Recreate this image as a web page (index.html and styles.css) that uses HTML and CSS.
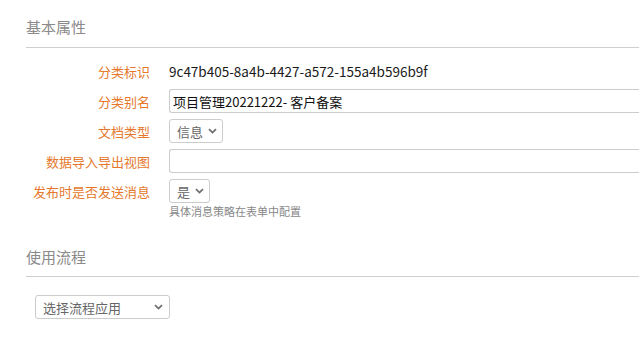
FILE: index.html
```html
<!DOCTYPE html>
<html lang="zh-CN">
<head>
    <meta charset="UTF-8">
    <title>分类属性</title>
    <link rel="stylesheet" href="styles.css">
</head>
<body>
    <div class="page">
        <h3 class="section-title">基本属性</h3>
        <div class="form">
            <div class="form-row">
                <label>分类标识</label>
                <span class="value">9c47b405-8a4b-4427-a572-155a4b596b9f</span>
            </div>
            <div class="form-row">
                <label>分类别名</label>
                <input type="text" class="text-input" value="项目管理20221222- 客户备案">
            </div>
            <div class="form-row">
                <label>文档类型</label>
                <div class="select">信息<svg class="chev" width="9" height="6" viewBox="0 0 9 6"><path d="M1 1.2 L4.5 4.6 L8 1.2" fill="none" stroke="#6f6f6f" stroke-width="1.8"/></svg></div>
            </div>
            <div class="form-row">
                <label>数据导入导出视图</label>
                <input type="text" class="text-input">
            </div>
            <div class="form-row">
                <label>发布时是否发送消息</label>
                <div class="select">是<svg class="chev" width="9" height="6" viewBox="0 0 9 6"><path d="M1 1.2 L4.5 4.6 L8 1.2" fill="none" stroke="#6f6f6f" stroke-width="1.8"/></svg></div>
            </div>
            <div class="help">具体消息策略在表单中配置</div>
        </div>

        <h3 class="section-title second">使用流程</h3>
        <div class="flow">
            <div class="select wide">选择流程应用<svg class="chev" width="9" height="6" viewBox="0 0 9 6"><path d="M1 1.2 L4.5 4.6 L8 1.2" fill="none" stroke="#6f6f6f" stroke-width="1.8"/></svg></div>
        </div>
    </div>
</body>
</html>
```

FILE: styles.css
```css
body { margin: 0; overflow: hidden; background: #fff; font-family: "Noto Sans CJK SC", "Noto Sans", sans-serif; font-size: 13px; color: #222; }
.page { padding-left: 26px; padding-top: 17px; }
.section-title { margin: 0; font-size: 15px; line-height: 20px; font-weight: normal; color: #8a8a8a; padding-bottom: 10px; border-bottom: 1px solid #cfcfcf; }
.section-title.second { margin-top: 29px; padding-bottom: 9px; }
.form { margin-top: 11px; }
.form-row { display: flex; align-items: center; height: 24px; margin-bottom: 6px; }
.form-row label { width: 124px; text-align: right; color: #e5782c; margin-right: 19px; flex-shrink: 0; }
.value { color: #1a1a1a; font-size: 13.5px; }
.text-input { flex: 1; min-width: 0; height: 24px; box-sizing: border-box; border: 1px solid #cccccc; border-right: none; border-radius: 3px 0 0 3px; padding: 0 3px; font-family: inherit; font-size: 13px; color: #111; outline: none; }
.select { display: inline-flex; align-items: center; height: 24px; box-sizing: border-box; border: 1px solid #cccccc; border-radius: 3px; padding: 0 5px 0 7px; color: #666; background: #fff; }
.select .chev { margin-left: 5px; }
.select.wide { width: 135px; justify-content: space-between; padding-right: 6px; }
.help { margin-left: 143px; margin-top: -5px; font-size: 11px; line-height: 14px; color: #888; }
.flow { padding: 18px 0 0 9px; }
```
